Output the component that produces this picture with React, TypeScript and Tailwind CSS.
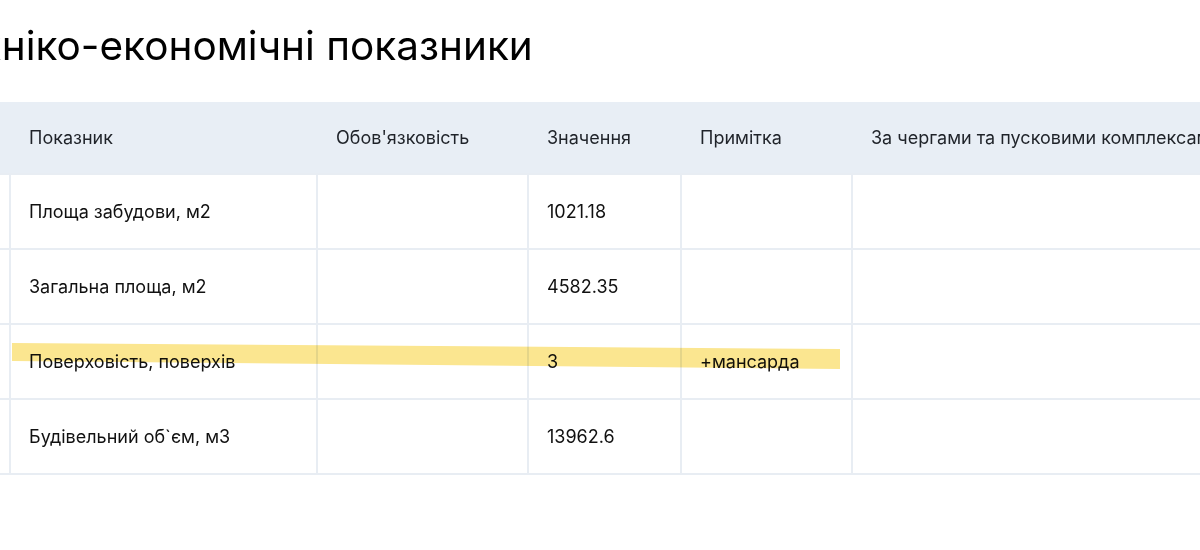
import React from 'react';

const headers = ['', 'Показник', "Обов'язковість", 'Значення', 'Примітка', 'За чергами та пусковими комплексами'];

const rows = [
  ['Площа забудови, м2', '', '1021.18', ''],
  ['Загальна площа, м2', '', '4582.35', ''],
  ['Поверховість, поверхів', '', '3', '+мансарда'],
  ['Будівельний об`єм, м3', '', '13962.6', ''],
];

const App: React.FC = () => {
  return (
    <div className="w-[1200px] h-[550px] overflow-hidden bg-white font-['Inter',sans-serif] text-[#111111]">
      <h1 className="-ml-[66px] pt-[20px] h-[102px] whitespace-nowrap font-['Inter',sans-serif] text-[40.5px] leading-[52px] text-black">
        Техніко-економічні показники
      </h1>

      <div className="relative">
        <table className="-ml-[51px] w-[1402px] table-fixed border-collapse text-[18px]">
          <colgroup>
            <col className="w-[60px]" />
            <col className="w-[307px]" />
            <col className="w-[211px]" />
            <col className="w-[153px]" />
            <col className="w-[171px]" />
            <col className="w-[500px]" />
          </colgroup>
          <thead>
            <tr className="h-[72px] bg-[#e8eef5]">
              {headers.map((h, i) => (
                <th key={i} className="pl-[19px] pr-5 text-left font-normal text-[#1f2329] whitespace-nowrap">
                  {h}
                </th>
              ))}
            </tr>
          </thead>
          <tbody>
            {rows.map((r, i) => (
              <tr key={i} className="h-[75px]">
                <td className="border-2 border-[#e8edf3]" />
                {r.map((c, j) => (
                  <td key={j} className="border-2 border-[#e8edf3] pl-[18px] pr-5 whitespace-nowrap">
                    {c}
                  </td>
                ))}
                <td className="border-2 border-[#e8edf3]" />
              </tr>
            ))}
          </tbody>
        </table>

        {/* highlighter stroke */}
        <svg
          className="pointer-events-none absolute left-0 top-0 mix-blend-multiply"
          width="1200"
          height="400"
        >
          <polygon points="12,241 840,247 840,267 12,259" fill="#fbe690" />
        </svg>
      </div>
    </div>
  );
};

export default App;
